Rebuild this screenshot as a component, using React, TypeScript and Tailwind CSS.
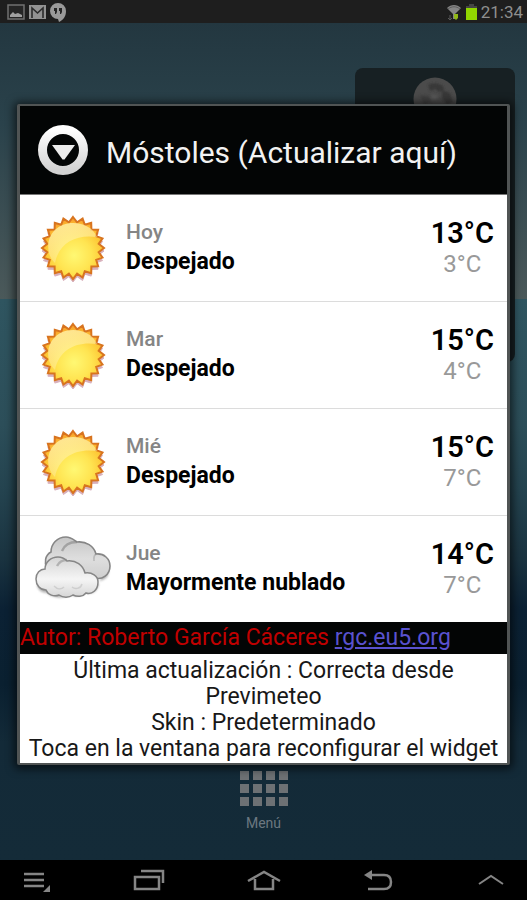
import type { ReactNode } from 'react'

type Forecast = {
  day: string
  summary: string
  max: string
  min: string
  icon: 'sun' | 'clouds'
}

const forecasts: Forecast[] = [
  { day: 'Hoy', summary: 'Despejado', max: '13°C', min: '3°C', icon: 'sun' },
  { day: 'Mar', summary: 'Despejado', max: '15°C', min: '4°C', icon: 'sun' },
  { day: 'Mié', summary: 'Despejado', max: '15°C', min: '7°C', icon: 'sun' },
  { day: 'Jue', summary: 'Mayormente nublado', max: '14°C', min: '7°C', icon: 'clouds' },
]

// 20-point star for the sun's rays
const rays = Array.from({ length: 40 }, (_, i) => {
  const r = i % 2 === 0 ? 31 : 26
  const a = (i * Math.PI) / 20 - Math.PI / 2
  return `${(38 + r * Math.cos(a)).toFixed(1)},${(38 + r * Math.sin(a)).toFixed(1)}`
}).join(' ')

function SunIcon() {
  return (
    <svg viewBox="0 0 76 76" className="h-[76px] w-[76px]" aria-hidden="true">
      <defs>
        <radialGradient id="sunFill" cx="0.52" cy="0.62" r="0.56">
          <stop offset="0" stopColor="#fff873" />
          <stop offset="0.5" stopColor="#ffe451" />
          <stop offset="0.85" stopColor="#fdc634" />
          <stop offset="1" stopColor="#f9a62c" />
        </radialGradient>
        <linearGradient id="sunShine" x1="0.2" y1="0" x2="0.6" y2="1">
          <stop offset="0" stopColor="#fff0a8" stopOpacity="0.85" />
          <stop offset="1" stopColor="#fff0a8" stopOpacity="0.35" />
        </linearGradient>
      </defs>
      <polygon points={rays} fill="#a8506a" stroke="#a8506a" opacity="0.45" transform="translate(0 3)" />
      <polygon points={rays} fill="url(#sunFill)" stroke="#d8741f" strokeWidth="2" />
      <path d="M14 43C10 26 22 13 38 13c11 0 20 5 24 14-20-3-38 5-42 26-3-3-5-6-6-10Z" fill="url(#sunShine)" />
    </svg>
  )
}

function CloudsIcon() {
  return (
    <svg viewBox="0 0 76 76" className="h-[76px] w-[76px]" aria-hidden="true">
      <defs>
        <linearGradient id="backCloud" x1="0" y1="0" x2="0" y2="1">
          <stop offset="0" stopColor="#c6c6c6" />
          <stop offset="0.5" stopColor="#dedede" />
          <stop offset="1" stopColor="#cdcdcd" />
        </linearGradient>
        <linearGradient id="frontCloud" x1="0" y1="0" x2="0" y2="1">
          <stop offset="0" stopColor="#d4d4d4" />
          <stop offset="0.55" stopColor="#f5f5f5" />
          <stop offset="1" stopColor="#d6d6d6" />
        </linearGradient>
        <filter id="soft" x="-10%" y="-10%" width="120%" height="130%">
          <feGaussianBlur stdDeviation="1" />
        </filter>
      </defs>
      <path
        d="M12 62c-6 0-10-4-10-9h61l9-18c4 8 0 14-8 15 0 10-6 14-14 12-4 4-10 4-14 2-7 4-19 3-24-2Z"
        fill="#666"
        opacity="0.5"
        filter="url(#soft)"
      />
      <g fill="url(#backCloud)" stroke="#868686" strokeWidth="1.6">
        <path d="M12 38c-3-6-2-14 4-17 0-8 6-15 15-15 5 0 8 3 11 5 9-1 17 4 19 12 8-1 14 5 14 12 0 9-8 14-15 12-9 5-42 4-48-9Z" />
        <path d="M27 20c2-5 7-9 15-9" fill="none" strokeWidth="2.4" opacity="0.6" />
        <path d="M59 30c0-3-1-5 2-7" fill="none" opacity="0.4" />
      </g>
      <g fill="url(#frontCloud)" stroke="#868686" strokeWidth="1.5">
        <path d="M11 59C5 59 1 54 1 48s4-10 9-10c0-7 6-12 13-12 4 0 7 2 9 4 9-1 16 4 18 12 7-1 13 3 13 9 0 8-6 13-12 11-3 4-9 4-13 2-4 3-10 3-14 0-5 2-11 0-13-5Z" />
        <path d="M22 35c2-4 5-6 10-6" fill="none" strokeWidth="2.4" opacity="0.5" />
        <path d="M19 55c3 3 7 4 10 1M37 56c4 3 9 1 10-3" fill="none" opacity="0.25" />
      </g>
    </svg>
  )
}

function StatusBar() {
  return (
    <header className="flex h-[23px] items-center justify-between bg-[#1e1e1e] pr-1 pl-[7px] text-[#8f8f8f]">
      <div className="flex items-center gap-[3px]">
        <svg viewBox="0 0 18 18" className="h-[18px] w-[18px]" role="img" aria-label="Imagen">
          <rect x="1" y="2" width="16" height="14" fill="#252525" stroke="#707070" strokeWidth="1.5" />
          <path d="M3 14v-2l3-3 2 2 3-1 4 2v2Z" fill="#a0a0a0" />
        </svg>
        <svg viewBox="0 0 18 18" className="h-[18px] w-[18px]" role="img" aria-label="Correo">
          <rect x="1" y="2" width="17" height="14" fill="#929292" />
          <path d="M4 15V5l5.5 5L15 5v10" fill="none" stroke="#2b2b2b" strokeWidth="1.6" />
        </svg>
        <svg viewBox="0 0 18 20" className="h-5 w-[18px]" role="img" aria-label="Mensajes">
          <path d="M9 1a8 8 0 1 0 0 16l1 3c4-2 7-5 7-11a8 8 0 0 0-8-8Z" fill="#999" />
          <path d="M5 6h3v4l-1 2H6V9H5Zm5 0h3v4l-1 2h-1V9h-1Z" fill="#252525" />
        </svg>
      </div>
      <div className="flex items-center gap-1">
        <svg viewBox="0 0 16 18" className="h-[18px] w-4" role="img" aria-label="Wi-Fi">
          <path d="M1 5c4-4 10-4 14 0l-6 6v5H7v-5Z" fill="#858585" />
          <path d="M2 6c4-3 8-3 12 0" fill="none" stroke="#5e5e5e" />
          <path d="M4 12v5m-2-2 2 2 2-2" fill="none" stroke="#5a5a5a" />
          <path d="M8 11h4v4l-2 2-2-2Z" fill="#91b817" />
        </svg>
        <svg viewBox="0 0 11 17" className="h-[17px] w-[11px]" role="img" aria-label="Batería">
          <path d="M3 1h5v2h3v3H0V3h3Z" fill="#444" />
          <rect y="5" width="11" height="12" fill="#91d600" />
        </svg>
        <span className="text-[17px] leading-5">21:34</span>
      </div>
    </header>
  )
}

// Moon widget that sits on the home screen, behind the dialog
function MoonWidget() {
  return (
    <div className="absolute top-[45px] right-3 h-[294px] w-40 rounded-lg bg-[#172023]">
      <svg viewBox="0 0 44 44" className="mx-auto mt-[9px] h-11 w-11" aria-hidden="true">
        <defs>
          <filter id="moonSoft">
            <feGaussianBlur stdDeviation="1.2" />
          </filter>
        </defs>
        <circle cx="22" cy="22" r="21.5" fill="#4b4b4b" />
        <g filter="url(#moonSoft)">
          <path d="M15 8c5-3 11-2 15 1l1 4-5 2-4-3-5 2ZM29 13l8 3 3 9-6 3-5-7Z" fill="#393939" />
          <path d="M7 18l8 1 3 6-7 3Z" fill="#3f3f3f" />
          <path d="M19 17l6 2-2 4-5-1Z" fill="#595959" />
        </g>
      </svg>
    </div>
  )
}

function ForecastRow({ item }: { item: Forecast }) {
  return (
    <li className="flex h-[107px] items-center border-b border-[#dcdcdc] pr-[13px] pl-[15px] last:h-[106px] last:border-b-0">
      {item.icon === 'sun' ? <SunIcon /> : <CloudsIcon />}
      <div className="ml-[15px] flex-1 pb-[2px] leading-[29px]">
        <p className="text-[21px] font-medium text-[#858585]">{item.day}</p>
        <p className="text-[23px] font-bold text-black">{item.summary}</p>
      </div>
      <div className="text-center">
        <p className="text-[29px] leading-8 font-semibold text-black">{item.max}</p>
        <p className="text-2xl leading-[30px] text-[#999]">{item.min}</p>
      </div>
    </li>
  )
}

function WeatherDialog() {
  return (
    <section className="relative mx-[17px] mt-[81px] rounded-xs border-[3px] border-t-2 border-b-2 border-[#505454] bg-white shadow-[0_1px_8px_3px_rgba(0,0,0,0.6)]">
      <button type="button" className="flex h-[89px] w-full items-center border-b border-[#777] bg-[#030505] pl-[17px] text-left text-[#f2f2f2]">
        <svg viewBox="0 0 52 52" className="h-[52px] w-[52px] shrink-0" aria-hidden="true">
          <defs>
            <linearGradient id="ring" x1="0" y1="0" x2="0" y2="1">
              <stop offset="0" stopColor="#fff" />
              <stop offset="1" stopColor="#d2d2d2" />
            </linearGradient>
          </defs>
          <circle cx="26" cy="26" r="20.5" fill="#030505" stroke="url(#ring)" strokeWidth="9" />
          <path d="M15 21h23L27.5 35.5h-2Z" fill="#ececec" />
        </svg>
        <span className="ml-[17px] pt-[6px] text-[30px] leading-9">Móstoles (Actualizar aquí)</span>
      </button>
      <ul>
        {forecasts.map((item) => (
          <ForecastRow key={item.day} item={item} />
        ))}
      </ul>
      <p className="bg-[#030505] text-[23px] leading-8 text-[#c00000]">
        Autor: Roberto García Cáceres{' '}
        <a href="http://rgc.eu5.org" className="text-[#5a52cf] underline">rgc.eu5.org</a>
      </p>
      <p className="pt-1 pb-px text-center text-[23px] leading-[26px] text-[#181818]">
        Última actualización : Correcta desde
        <br />
        Previmeteo
        <br />
        Skin : Predeterminado
        <br />
        Toca en la ventana para reconfigurar el widget
      </p>
    </section>
  )
}

function NavButton({ label, children }: { label: string; children: ReactNode }) {
  return (
    <button type="button" aria-label={label} className="flex h-10 w-10 items-center justify-center">
      <svg viewBox="0 0 40 30" className="h-[30px] w-10" fill="none" stroke="#858585" strokeWidth="2.5">
        {children}
      </svg>
    </button>
  )
}

function NavBar() {
  return (
    <nav className="flex h-10 items-center justify-between bg-black px-4">
      <NavButton label="Opciones">
        <path d="M8 9h20M8 15h20M8 21h20" />
        <path d="M34 20v7h-7Z" fill="#858585" stroke="none" />
      </NavButton>
      <NavButton label="Recientes">
        <path d="M5 12h24v12H5ZM11 6h22v12" />
      </NavButton>
      <NavButton label="Inicio">
        <path d="m4 16 16-9 16 9M11 14v10h18V14" />
      </NavButton>
      <NavButton label="Atrás">
        <path d="M10 10h17q7 0 7 7t-7 7H11" />
        <path d="m7 10 8-5v10Z" fill="#858585" stroke="none" />
      </NavButton>
      <NavButton label="Subir">
        <path d="m8 19 12-8 12 8" strokeWidth="2" />
      </NavButton>
    </nav>
  )
}

export default function App() {
  return (
    <div className="flex min-h-screen flex-col bg-black font-[Roboto,sans-serif]">
      <StatusBar />
      <main className="relative flex flex-1 flex-col bg-[linear-gradient(180deg,#233740_0%,#2a424b_12%,#4b595a_33%,#2f5560_33%,#2c4e59_48%,#24434f_56%,#1a3340_64%,#0b2134_70%,#0a2030_79%,#132a38_86%,#142b38_100%)]">
        <MoonWidget />
        <WeatherDialog />
        <button type="button" className="mx-auto mt-[6px] flex flex-col items-center text-[#6c7880]">
          <span className="grid grid-cols-4 gap-1">
            {Array.from({ length: 12 }, (_, i) => (
              <span key={i} className="h-[9px] w-[9px] bg-[#6d7174]" />
            ))}
          </span>
          <span className="mt-[9px] text-sm leading-4">Menú</span>
        </button>
      </main>
      <NavBar />
    </div>
  )
}
